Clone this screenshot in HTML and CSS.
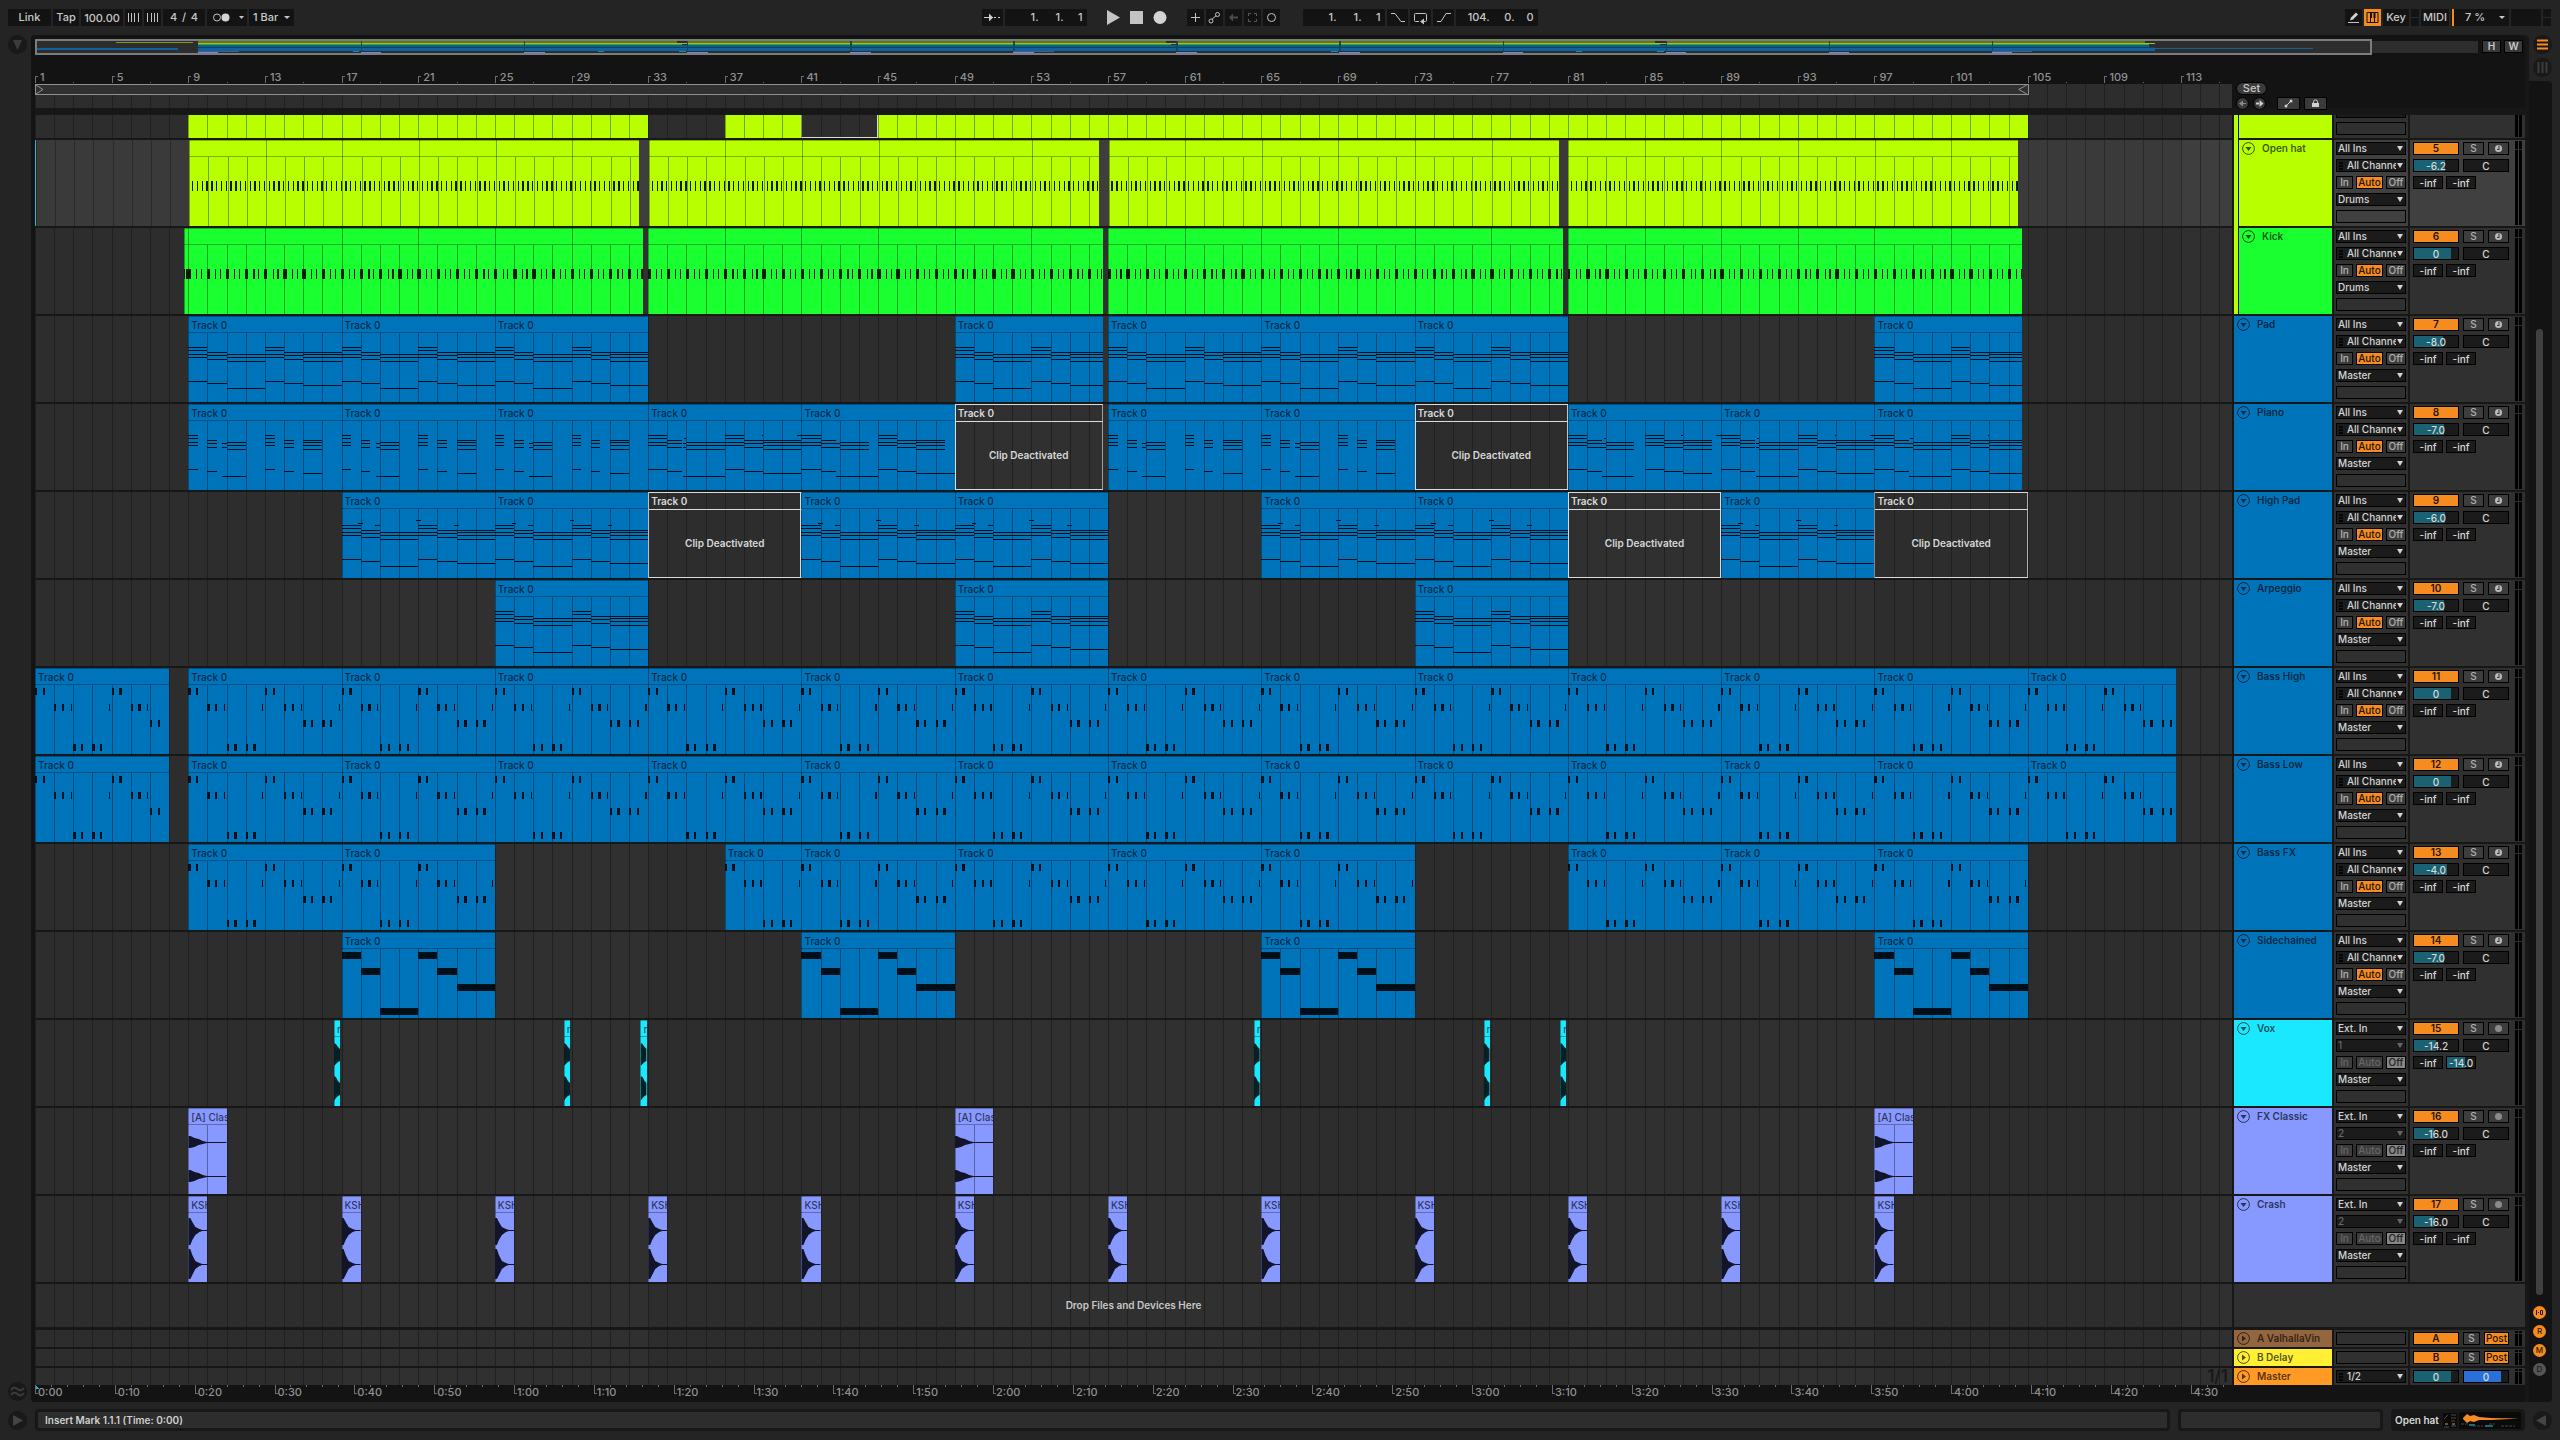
FILE: index.html
```html
<!DOCTYPE html>
<html lang="en">
<head>
<meta charset="utf-8">
<title>Arrangement</title>
<link rel="stylesheet" href="styles.css">
</head>
<body>
<header class="control-bar">
  <div class="group">
    <button class="cell w43">Link</button>
    <button class="cell w26">Tap</button>
    <input class="cell w42" aria-label="Tempo" value="100.00">
    <button class="cell w17" aria-label="Nudge down"><svg width="13" height="17"><path d="M1.5 4v9M4.5 4v9M7.5 4v9M11.5 4v9" stroke="#c4c4c4"/></svg></button>
    <button class="cell w17" aria-label="Nudge up"><svg width="13" height="17"><path d="M1.5 4v9M5.5 4v9M8.5 4v9M11.5 4v9" stroke="#c4c4c4"/></svg></button>
    <div class="cell w42 spread"><span>4</span><span>/</span><span>4</span></div>
    <button class="cell w40" aria-label="Metronome"><svg width="36" height="17"><circle cx="8" cy="8.500" r="3.500" fill="none" stroke="#c4c4c4"/><circle cx="16.500" cy="8.500" r="4" fill="#d4d4d4"/><path d="M30 7h5l-2.500 3z" fill="#c4c4c4"/></svg></button>
    <label class="cell w45 pick"><select aria-label="Quantization"><option>1 Bar</option></select></label>
  </div>
  <div class="group middle">
    <button class="cell w21" aria-label="Follow"><svg width="19" height="17"><path d="M1 8.500h9M11 8.500h2M15 8.500h2" stroke="#d0d0d0"/><path d="M6 4.500l4 4-4 4z" fill="#d0d0d0"/></svg></button>
    <div class="cell w82 position"><span>1.</span><span>1.</span><span>1</span></div>
    <div class="transport">
      <button aria-label="Play"><svg width="13" height="17"><path d="M0 1l13 7.500L0 16z" fill="#c4c4c4"/></svg></button>
      <button aria-label="Stop"><svg width="13" height="17"><path d="M0 2h13v13H0z" fill="#c4c4c4"/></svg></button>
      <button aria-label="Record"><svg width="14" height="17"><circle cx="7" cy="8.500" r="6.500" fill="#d4d4d4"/></svg></button>
    </div>
    <button class="cell w17" aria-label="Overdub"><svg width="15" height="17"><path d="M3 8.500h9M7.500 4v9" stroke="#c4c4c4"/></svg></button>
    <button class="cell w17" aria-label="Automation arm"><svg width="15" height="17"><path d="M4 11L10 6" stroke="#c4c4c4"/><circle cx="4" cy="12" r="2" fill="#131313" stroke="#c4c4c4"/><circle cx="10.500" cy="5.500" r="2" fill="#131313" stroke="#c4c4c4"/></svg></button>
    <button class="cell w17" aria-label="Re-enable automation"><svg width="15" height="17"><path d="M4 8.500h8" stroke="#4c4c4c" stroke-width="2"/><path d="M3 8.500l4-4v8z" fill="#4c4c4c"/></svg></button>
    <button class="cell w17" aria-label="Capture"><svg width="15" height="17"><path d="M3.500 7V4.500H6M9 4.500h2.500V7M11.500 10v2.500H9M6 12.500H3.500V10" fill="none" stroke="#5a5a5a"/></svg></button>
    <button class="cell w17" aria-label="Session record"><svg width="15" height="17"><circle cx="7.500" cy="8.500" r="4" fill="none" stroke="#c4c4c4"/></svg></button>
    <div class="cell w82 position lead"><span>1.</span><span>1.</span><span>1</span></div>
    <button class="cell w21" aria-label="Punch in"><svg width="19" height="17"><path d="M3 4.500h4l6 8h4" fill="none" stroke="#c4c4c4"/></svg></button>
    <button class="cell w21" aria-label="Loop"><svg width="19" height="17"><path d="M8 12.500H4.500q-1 0-1-1v-6q0-1 1-1h10q1 0 1 1v6q0 1-1 1H13" fill="none" stroke="#c4c4c4"/><path d="M9 12.500l4-3v6z" fill="#c4c4c4"/></svg></button>
    <button class="cell w21" aria-label="Punch out"><svg width="19" height="17"><path d="M3 12.500h4l5-8h5" fill="none" stroke="#c4c4c4"/></svg></button>
    <div class="cell w82 position"><span>104.</span><span>0.</span><span>0</span></div>
  </div>
  <div class="group right">
    <button class="cell w17" aria-label="Draw mode"><svg width="15" height="17"><path d="M2 13.500h11" stroke="#c4c4c4"/><path d="M4 11.500l1-3 5-5 2 2-5 5z" fill="#d0d0d0"/></svg></button>
    <button class="cell w17 lit" aria-label="Computer keyboard"><svg width="13" height="13"><path d="M1 1.500h11v10H1zM4.500 2v9M8.500 2v9" fill="none" stroke="#131313"/><path d="M4 2h2v5H4zM7.500 2h2v5h-2z" fill="#131313"/></svg></button>
    <button class="cell w26">Key</button>
    <span class="cell w8 io"></span>
    <button class="cell w28">MIDI</button>
    <label class="cell w58 pick load"><select aria-label="CPU load"><option>7 %</option></select></label>
    <span class="cell w30"></span>
    <span class="cell w8 io"></span>
  </div>
</header>

<main class="workspace">
  <aside class="rail left-rail">
    <button class="disc" aria-label="Show browser"><svg width="19" height="19"><path d="M5 5h9l-4.500 10z" fill="#3c3c3c"/></svg></button>
    <button class="disc" aria-label="Show groove"><svg width="19" height="19"><path d="M3 8q3-4 6.500-1t6.500-1M3 13q3-4 6.500-1t6.500-1" fill="none" stroke="#3c3c3c" stroke-width="2"/></svg></button>
  </aside>

  <section class="panel">
    <div class="overview-row">
      <div class="overview"><svg class="fill" id="overview"></svg></div>
      <button class="fit">H</button>
      <button class="fit">W</button>
    </div>
    <div class="ruler-row">
      <div class="ruler">
        <div class="bar-ruler" id="bars"></div>
        <div class="scrub"><svg class="fill" id="scrub"></svg></div>
      </div>
      <div class="locators">
        <button class="pill">Set</button>
        <div class="locator-row">
          <button class="nav dim" aria-label="Previous locator"><svg width="11" height="11"><path d="M2 5.500l4-3v6zM5 5h4v1H5z" fill="#8a8a8a"/></svg></button>
          <button class="nav" aria-label="Next locator"><svg width="11" height="11"><path d="M9.500 5.500l-4-3.500v7zM2 4.500h4v2H2z" fill="#d0d0d0"/></svg></button>
          <button class="tool first" aria-label="Automation mode"><svg width="11" height="11"><path d="M3 8l5-5" stroke="#d0d0d0"/><circle cx="3" cy="8" r="1.500" fill="#d0d0d0"/><circle cx="8" cy="3" r="1.500" fill="#d0d0d0"/></svg></button>
          <button class="tool" aria-label="Lock envelopes"><svg width="11" height="11"><path d="M2 5h7v4H2z" fill="#d0d0d0"/><path d="M3.500 5V3.500q0-1.500 2-1.500t2 1.500V5" fill="none" stroke="#d0d0d0"/></svg></button>
        </div>
      </div>
    </div>
    <div class="tracks" id="tracks"></div>
    <div class="drop-row">
      <div class="lane"><svg class="fill" data-grid></svg><p class="drop">Drop Files and Devices Here</p></div>
      <div class="blank"></div>
    </div>
    <div class="returns" id="returns"></div>
    <div class="time-row"><div class="time-ruler" id="times"></div></div>
  </section>

  <aside class="rail right-rail">
    <div class="views">
      <button class="disc" aria-label="Arrangement view"><svg width="19" height="19"><path d="M4 5.500h11M4 9.500h11M4 13.500h11" stroke="#f68b1f" stroke-width="2"/></svg></button>
      <button class="disc" aria-label="Session view"><svg width="19" height="19"><path d="M5.500 4v11M9.500 4v11M13.500 4v11" stroke="#3c3c3c" stroke-width="2"/></svg></button>
    </div>
    <div class="side">
      <div class="scrollbar"></div>
      <button class="dot" aria-label="Show I/O"><svg width="13" height="13"><path d="M3.500 4v5M5 6.500h1M7.500 4.500h2v4h-2z" fill="none" stroke="#2a1a08"/></svg></button>
      <button class="dot">R</button>
      <button class="dot">M</button>
      <button class="dot off">D</button>
    </div>
  </aside>
</main>

<footer class="status">
  <button class="disc" aria-label="Show info"><svg width="19" height="19"><path d="M5 4v11l10-5.500z" fill="#444"/></svg></button>
  <div class="message">Insert Mark 1.1.1 (Time: 0:00)</div>
  <div class="message small"></div>
  <div class="device"><span>Open hat</span><svg width="78" height="17"><path d="M0 1h14v15H0zM16 0h62v17H16z" fill="#0a0a0a"/><path d="M1 7l4-4M8 3h5M8 6h5M8 9h4" stroke="#4a4a4a"/><path d="M2 12h3M9 12h3" stroke="#f68b1f"/><path d="M1 15h5M8 14h5" stroke="#26606b"/><path d="M20 6l4-4 3 2 4-1 5 2 12 1 28 .5-28 1.500-12 0-5 2-4-1-3 2-4-4z" fill="#f68b1f"/><path d="M18 12h8M30 14h10M46 12h6M58 14h14" stroke="#454545" stroke-dasharray="3 1"/><path d="M26 13h6M42 14h8" stroke="#1f6a75" stroke-width="2"/></svg></div>
  <button class="disc" aria-label="Show detail"><svg width="19" height="19"><path d="M13 4v11L3 9.500z" fill="#444"/></svg></button>
</footer>
<script src="script.js"></script>
</body>
</html>
```
FILE: styles.css
```css
* { box-sizing: border-box; margin: 0; }
body {
  min-height: 100vh; display: flex; flex-direction: column;
  background: #242424; color: #c8c8c8;
  font: 500 10px/13px Inter, "Open Sans", sans-serif;
}
button, input, select { font: inherit; color: inherit; border: 0; padding: 0; background: none; border-radius: 0; }
svg { display: block; }
.fill { width: 100%; height: 100%; position: absolute; inset: 0; shape-rendering: crispEdges; }

/* control bar */
.control-bar { height: 35px; padding: 9px 9px 9px 8px; display: grid; grid-template-columns: 1fr auto 1fr; font-size: 11px; }
.group { display: flex; gap: 2px; }
.middle { margin-right: 40px; }
.right { justify-content: flex-end; }
.cell { height: 17px; background: #131313; display: flex; align-items: center; justify-content: center; text-align: center; overflow: hidden; flex: none; }
.w8 { width: 8px; } .w17 { width: 17px; } .w21 { width: 21px; } .w26 { width: 26px; } .w28 { width: 28px; }
.w30 { width: 30px; } .w40 { width: 40px; } .w42 { width: 42px; } .w43 { width: 43px; } .w45 { width: 45px; }
.w58 { width: 58px; } .w82 { width: 82px; }
.spread { justify-content: space-between; padding: 0 7px; }
.position { justify-content: flex-end; gap: 11px; padding-right: 4px; }
.position span { min-width: 14px; text-align: right; }
.position span:last-child { min-width: 8px; }
.lead { margin-left: 21px; }
.transport { display: flex; gap: 10px; padding: 0 18px; }
.lit { background: #f68b1f; }
.io { background: linear-gradient(#131313 8px, #2a2a2a 8px, #2a2a2a 9px, #131313 9px); }
.pick { position: relative; justify-content: flex-start; }
.pick select { width: 100%; height: 100%; appearance: none; padding-left: 4px; }
.pick::after { content: ""; position: absolute; right: 4px; top: 7px; border: 3px solid transparent; border-top: 3px solid #c8c8c8; border-bottom: 0; pointer-events: none; }
.load { border-left: 1px solid #131313; box-shadow: inset 2px 0 #f68b1f; }
.load select { padding-left: 13px; }

/* frame */
.workspace { flex: 1; display: flex; }
.rail { width: 31px; flex: none; display: flex; flex-direction: column; align-items: center; }
.left-rail { justify-content: space-between; padding: 0 0 1px 4px; }
.disc { width: 19px; height: 19px; border-radius: 50%; background: #191919; flex: none; }
.panel { flex: 1; min-width: 0; background: #171717; border-radius: 4px 4px 0 4px; padding: 0 4px; display: flex; flex-direction: column; box-shadow: inset 4px 0 #131313; }
.views { height: 46px; display: flex; flex-direction: column; align-items: center; gap: 4px; padding-right: 4px; }
.right-rail { align-items: stretch; }
.side { flex: 1; width: 23px; background: #131313; border-radius: 0 4px 4px 0; padding: 248px 2px 26px 0; display: flex; flex-direction: column; align-items: center; gap: 6px; }
.scrollbar { width: 7px; flex: 1; background: #404040; border-radius: 4px; margin-bottom: 5px; }
.dot { width: 13px; height: 13px; border-radius: 50%; background: #f68b1f; color: #2a1a08; font-size: 8px; flex: none; }
.off { background: #555; color: #1c1c1c; }

/* overview and rulers */
.overview-row { display: flex; gap: 3px; padding: 4px 2px 0 0; background: #131313; border-radius: 4px 4px 0 0; }
.overview { flex: 1; height: 16px; position: relative; margin-right: 1px; }
.fit { width: 19px; height: 13px; border: 1px solid #000; background: #3a3a3a; font-weight: 600; margin-top: 1px; line-height: 11px; }
.ruler-row { display: flex; gap: 2px; background: #131313; }
.ruler { flex: 1; display: flex; flex-direction: column; }
.bar-ruler { height: 29px; position: relative; color: #919191; font-size: 11px; }
.tick { position: absolute; bottom: 0; height: 13px; padding-left: 5px; line-height: 13px; }
.tick::before { content: ""; position: absolute; left: 0; bottom: 1px; width: 2px; height: 6px; border: 1px solid #6c6c6c; border-width: 1px 0 0 1px; }
.scrub { height: 24px; position: relative; background: #2d2d2d; }
.locators { width: 291px; padding: 27px 0 0 2px; margin-bottom: -3px; }
.pill { width: 31px; height: 13px; border: 1px solid #000; border-radius: 7px; background: #3a3a3a; font-size: 11px; line-height: 11px; display: block; }
.locator-row { display: flex; gap: 4px; padding-top: 2px; align-items: center; }
.nav { width: 13px; height: 13px; border-radius: 50%; border: 1px solid #000; background: #3a3a3a; flex: none; }
.tool { width: 23px; height: 13px; border: 1px solid #000; background: #3a3a3a; display: flex; justify-content: center; align-items: center; }
.first { margin-left: 7px; }
.tracks { padding-top: 7px; display: flex; flex-direction: column; gap: 2px; }

/* tracks */
.track, .return { display: grid; grid-template-columns: minmax(0, 1fr) 98px 74px 115px; gap: 0 2px; height: 86px; flex: none; }
.peek { height: 23px; overflow: hidden; display: flex; flex-direction: column; justify-content: flex-end; }
.lane { position: relative; overflow: hidden; background: #2d2d2d; }
.selected .lane { border-left: 1px solid #25b8dc; }
.title { position: absolute; top: 1px; height: 16px; line-height: 16px; padding-left: 3px; overflow: hidden; white-space: nowrap; color: rgba(0, 0, 0, .68); }
.title.muted { color: #d8d8d8; font-weight: 600; }
.note { position: absolute; top: 43px; line-height: 16px; text-align: center; color: #d8d8d8; font-weight: 600; }
.head { background: var(--tint); color: rgba(0, 0, 0, .68); font-weight: 600; display: flex; align-items: flex-start; padding: 2px 0 0 3px; gap: 7px; white-space: nowrap; overflow: hidden; }
.nested { position: relative; }
.nested .head { box-shadow: inset 5px 0 #171717; padding-left: 8px; }
.nested::after { content: ""; position: absolute; top: -2px; bottom: 0; right: 287px; width: 4px; background: #b8ff00; }
.fold { width: 13px; height: 13px; color: inherit; flex: none; }
.col { background: #303030; padding: 2px; display: flex; flex-direction: column; gap: 4px; overflow: hidden; }
.selected .col { background: #404040; }
.box { height: 13px; border: 1px solid #000; background: #1b1b1b; display: block; width: 100%; position: relative; line-height: 11px; flex: none; overflow: hidden; color: #d4d4d4; }
.box select { appearance: none; width: 100%; height: 11px; line-height: 11px; display: block; padding-left: 1px; }
.box.down::after { content: ""; position: absolute; right: 2px; top: 3px; border: 3px solid transparent; border-top: 5px solid #d4d4d4; border-bottom: 0; pointer-events: none; }
.box.channel select { padding: 0 9px 0 10px; }
.box.channel::before, .box.pair::before { content: ""; position: absolute; left: 2px; top: 2px; width: 4px; height: 8px; background: repeating-linear-gradient(#050505 0 2px, #1b1b1b 2px 3px); }
.box.pair select { padding-left: 10px; }
.box.faint { color: #666; }
.box.faint::after { border-top-color: #666; }
.box.empty { background: #303030; }
.selected .box.empty { background: #404040; }
.trio { display: flex; gap: 3px; }
.mon { height: 13px; border: 1px solid #000; background: #3d3d3d; line-height: 11px; color: #b0b0b0; overflow: hidden; flex: none; }
.mon.a { width: 17px; } .mon.b { width: 27px; } .mon.c { width: 20px; }
.mon.on { background: #f68b1f; color: #241404; }
.mon.gone { color: #666; }
.mon.grey { background: #868686; color: #222; }
.mix { background: #303030; display: flex; justify-content: space-between; padding: 0 3px; overflow: hidden; }
.selected .mix { background: #404040; }
.strip { padding-top: 2px; display: flex; flex-direction: column; gap: 4px; }
.line { display: flex; gap: 4px; }
.line.sends { gap: 3px; }
.act { width: 46px; height: 13px; border: 1px solid #000; background: #f68b1f; color: #241404; line-height: 11px; font-weight: 600; }
.sq { width: 21px; height: 13px; border: 1px solid #000; background: #3d3d3d; color: #b0b0b0; line-height: 11px; display: flex; justify-content: center; align-items: center; }
.sq.slim { width: 17px; }
.post { width: 25px; height: 13px; border: 1px solid #000; background: #f68b1f; color: #241404; line-height: 11px; }
.val { width: 46px; height: 13px; border: 1px solid #000; text-align: center; color: #d8d8d8; line-height: 11px; background: linear-gradient(90deg, #1a6272 var(--fill, 0%), #1b1b1b var(--fill, 0%)); }
.val.cue { background: linear-gradient(90deg, #2a70d8 var(--fill, 0%), #1b1b1b var(--fill, 0%)); }
.sends .val { width: 30px; }
.meter { width: 7px; margin: 1px 0; background: linear-gradient(90deg, #000 3px, transparent 3px, transparent 4px, #000 4px); position: relative; }
.meter::after { content: ""; position: absolute; left: 0; right: 0; top: 8px; height: 1px; background: #303030; }
.return .meter::after { top: 2px; }
.drop-row { flex: 1 0 45px; display: grid; grid-template-columns: minmax(0, 1fr) 291px; gap: 2px; padding-top: 2px; }
.drop { position: relative; text-align: center; font-weight: 600; color: #c8c8c8; padding-top: 15px; }
.blank { background: #303030; }
.returns { display: flex; flex-direction: column; gap: 2px; padding-top: 3px; }
.return { height: 17px; }
.division { position: absolute; right: 4px; bottom: 0; font-size: 17px; line-height: 17px; font-weight: 600; color: #191919; }
.time-row { background: #131313; padding-right: 293px; border-radius: 0 0 4px 4px; }
.time-ruler { height: 17px; position: relative; color: #919191; font-size: 11px; }
.stamp { position: absolute; top: 0; padding-left: 3px; line-height: 15px; }
.stamp::before { content: ""; position: absolute; left: 0; top: 0; width: 2px; height: 8px; border: 1px solid #6c6c6c; border-width: 0 0 1px 1px; }

/* status */
.status { height: 38px; display: flex; align-items: center; gap: 8px; padding: 0 8px 2px; }
.message { flex: 1; height: 22px; background: #2d2d2d; border: 3px solid #171717; border-radius: 4px; padding-left: 7px; line-height: 16px; font-weight: 600; color: #d0d0d0; }
.message.small { flex: none; width: 205px; }
.device { width: 134px; height: 22px; background: #171717; border-radius: 4px; display: flex; align-items: center; justify-content: space-between; padding: 0 4px; font-weight: 600; white-space: nowrap; color: #d8d8d8; }
```
FILE: script.js
```js
// Bars visible across the timeline, counted from bar 1.
const SPAN = 114.66;
const at = bar => (bar - 1) / SPAN * 100 + '%';
const wide = bars => bars / SPAN * 100 + '%';
const rect = (from, to, y, h, fill) =>
  `<rect x="${at(from)}" width="${wide(to - from)}" y="${y}" height="${h}" fill="${fill}"/>`;
const vline = (bar, y, h, fill) => `<rect x="${at(bar)}" width="1" y="${y}" height="${h}" fill="${fill}"/>`;

function grid(light) {
  let out = '';
  for (let b = 1; b < 115; b += 16) {
    const odd = ((b - 1) / 16) % 2;
    out += rect(b, Math.min(b + 16, 116), 0, '100%', light ? (odd ? '#3e3e3e' : '#3a3a3a') : (odd ? '#303030' : '#2d2d2d'));
  }
  for (let b = 1; b < 116; b++) out += vline(b, 0, '100%', light ? '#292929' : '#202020');
  return out;
}

// Notes: [start, end, y, height], start and end in bars from the clip's start.
const chord = (s, e, ys) => ys.map(y => [s, e, y, 1]);
const C1 = [31, 34, 38, 41], C2 = [36, 39, 43], C3 = [38, 41, 45], C4 = [36, 38, 41, 45];
const pad = [
  ...chord(0, 1, [...C1, 65]), ...chord(1, 2, [...C2, 67]), ...chord(2, 4, [...C3, 72]),
  ...chord(4, 5, [...C1, 65]), ...chord(5, 6, [...C2, 67]), ...chord(6, 8, [...C4, 69])];
const high = [...pad.map(n => [n[0], n[1], n[2] + 2, 1]),
  [.88, 1.12, 31, 1], [1.75, 2, 33, 1], [3.9, 4.15, 28, 1], [5.88, 6.12, 33, 1]];
const pianoShort = [
  ...chord(0, .5, [...C1, 65]), ...chord(1, 1.5, [...C2, 67]), ...chord(1.78, 2, [39, 43, 72]), ...chord(2, 3, [...C3, 72]),
  ...chord(4, 4.5, [...C1, 65]), ...chord(5, 5.5, [...C2, 67]), ...chord(6, 7, [...C4, 69])];
const pianoBase = [...chord(0, 1, [...C1, 65]), ...chord(1, 1.78, [...C2, 67]), ...chord(1.8, 2, [39, 43, 72]),
  ...chord(4, 5, [...C1, 65]), ...chord(5, 6, [...C2, 67])];
const pickups = [[1.88, 2, 34, 1], [5.92, 6, 31, 1], [7.75, 8, 31, 1]];
const pianoLong = [...pianoBase, ...pickups, ...chord(2, 4, [...C3, 72]), ...chord(6, 8, [...C4, 69])];
const pianoGap = [...pianoBase, ...chord(2, 3.5, C3), ...chord(2, 4, [72]), ...chord(6, 7.5, C4), ...chord(6, 8, [69])];
const pianoBreak = [...pianoBase, ...pickups, ...chord(2, 3.45, [...C3, 72]), ...chord(6, 7.5, [...C4, 69])];
const bassStarts = { 20: [0, .4, 4, 4.4], 36: [1, 1.4, 1.86, 3.86, 5, 5.4, 5.86, 7.86], 52: [6, 6.4, 7, 7.4], 76: [2, 2.4, 3, 3.4] };
const bass = Object.entries(bassStarts).flatMap(([y, list]) => list.map(s => [s, s + (s % 1 > .8 ? .06 : .12), +y, 7]));
const side = [[0, 1, 20, 7], [1, 2, 36, 7], [2, 4, 76, 7], [4, 5, 20, 7], [5, 6, 36, 7], [6, 8, 52, 7]];
const hats = [.15, .4, .65, .9].map(s => [s, s + .07, 41, 10]);
const kicks = [[0, .13, 41, 10], [.4, .46, 41, 10], [.65, .71, 41, 10], [.96, 1, 41, 10]];
const repeat = (notes, bars) => Array.from({ length: bars }, (_, i) => notes.map(n => [n[0] + i, n[1] + i, n[2], n[3]])).flat();

const waves = {
  vox: 'M0 23L2 24 4 27 6 29V41L4 42 2 44 0 46zM0 56L2 57 4 61 6 63V75L4 76 2 78 0 81z',
  fx: 'M0 28L2 28 6 30 10 31 14 33 18 34H37V35H18L14 36 10 37 6 39 2 40 0 40zM0 62L2 62 6 64 10 65 14 67 18 68H37V69H18L14 70 10 71 6 73 2 74 0 74z',
  crash: 'M0 22H2L4 26 7 31 11 33 14 34H19V35H14L11 36 7 39 4 44 2 49H0zM0 53H2L4 59 7 65 11 67 14 68H19V69H14L11 70 7 73 4 79 2 83H0z'
};

const clips = (starts, notes, title = 'Track 0', len = 8) => starts.map(s => ({ s, e: s + len, notes, title }));
const cut = (list, start, end) => list.map(c => c.s === start ? { ...c, e: end } : c);
const off = (s, e, title = 'Track 0') => ({ s, e, title, off: true });

function fours(ends, notes) {
  const out = [];
  [9, 33, 57, 81].forEach((s, i) => {
    for (let b = s; b < ends[i]; b += 4) out.push({ s: b, e: Math.min(b + 4, ends[i]), notes: repeat(notes, 4), title: '' });
  });
  return out;
}

function drawLane(track) {
  let svg = grid(track.selected), html = '';
  const ink = { '#0074bb': '#000e18', '#8799ff': '#12152a', '#19e8ff': '#032024' }[track.tint] || '#0c1a02';
  for (const c of track.clips) {
    const len = c.e - c.s;
    if (c.off) {
      svg += `<svg x="${at(c.s)}" width="${wide(len)}" height="86"><path d="M0 0h9999v1H0zM0 17h9999v1H0zM0 85h9999v1H0zM0 0h1v86H0z" fill="#dcdcdc"/><rect x="100%" width="1" height="86" transform="translate(-1)" fill="#dcdcdc"/></svg>`;
      if (c.title) html += `<span class="title muted" style="left:${at(c.s)};width:${wide(len)}">${c.title}</span><span class="note" style="left:${at(c.s)};width:${wide(len)}">Clip Deactivated</span>`;
      continue;
    }
    svg += rect(c.s, c.e, 0, 86, track.tint);
    svg += rect(c.s, c.e, 0, 1, 'rgba(0,0,0,.3)') + rect(c.s, c.e, 16, 1, 'rgba(0,0,0,.3)') + vline(c.s, 0, 86, 'rgba(0,0,0,.35)');
    for (let b = Math.floor(c.s) + 1; b < c.e; b++) svg += vline(b, 17, 69, 'rgba(0,0,0,.35)');
    for (const n of c.notes || []) if (n[0] < len) svg += rect(c.s + n[0], c.s + Math.min(n[1], len), n[2], n[3], ink);
    if (c.wave) {
      const w = { vox: 6, fx: 37, crash: 19 }[c.wave];
      svg += `<svg x="${at(c.s)}" width="${wide(len)}" height="86" viewBox="0 0 ${w} 86" preserveAspectRatio="none"><path d="${waves[c.wave]}" fill="${ink}" shape-rendering="auto"/></svg>`;
    }
    if (c.title) html += `<span class="title" style="left:${at(c.s)};width:${wide(len)}">${c.title}</span>`;
  }
  return `<div class="lane"><svg class="fill">${svg}</svg>${html}</div>`;
}

const BLUE = '#0074bb', LIME = '#b8ff00', VIOLET = '#8799ff';
const eights = [9, 17, 25, 33, 41, 49, 57, 65, 73, 81, 89, 97, 105];
const bassLine = [{ s: 1, e: 8, notes: bass, title: 'Track 0' }, ...cut(clips(eights, bass), 105, 112.75)];
const audio = (kind, title, starts, len) => starts.map(s => ({ s, e: s + len, title, wave: kind }));

const tracks = [
  { n: '', name: '', tint: LIME, nested: true, peek: true, out: 'Drums', vol: '', fill: 84,
    clips: [{ s: 9, e: 33 }, { s: 37, e: 41 }, off(41, 45, ''), { s: 45, e: 105 }] },
  { n: 5, name: 'Open hat', tint: LIME, nested: true, selected: true, out: 'Drums', vol: '-6.2', fill: 71, clips: fours([32.5, 56.5, 80.5, 104.5], hats) },
  { n: 6, name: 'Kick', tint: '#1aff2f', nested: true, out: 'Drums', vol: '0', fill: 84,
    clips: [{ s: 8.78, e: 9, notes: [[0, .04, 41, 10], [.12, .22, 41, 10]] }, ...fours([32.72, 56.72, 80.72, 104.72], kicks)] },
  { n: 7, name: 'Pad', vol: '-8.0', fill: 66, clips: cut(cut(clips([9, 17, 25, 49, 57, 65, 73, 97], pad), 49, 56.72), 97, 104.72) },
  { n: 8, name: 'Piano', vol: '-7.0', fill: 68, clips: [...clips([9, 17, 25, 57, 65], pianoShort), ...cut(clips([33, 89, 97], pianoLong), 97, 104.72), ...clips([41], pianoGap), ...clips([81], pianoBreak), off(49, 56.72), off(73, 81)] },
  { n: 9, name: 'High Pad', vol: '-6.0', fill: 70, clips: [...clips([17, 25, 41, 49, 65, 73, 89], high), off(33, 41), off(81, 89), off(97, 105)] },
  { n: 10, name: 'Arpeggio', vol: '-7.0', fill: 68, clips: clips([25, 49, 73], pad) },
  { n: 11, name: 'Bass High', vol: '0', fill: 84, clips: bassLine },
  { n: 12, name: 'Bass Low', vol: '0', fill: 84, clips: bassLine },
  { n: 13, name: 'Bass FX', vol: '-4.0', fill: 75, clips: [...clips([37], bass, 'Track 0', 4), ...clips([9, 17, 41, 49, 57, 65, 81, 89, 97], bass)] },
  { n: 14, name: 'Sidechained', vol: '-7.0', fill: 68, clips: clips([17, 41, 65, 97], side) },
  { n: 15, name: 'Vox', tint: '#19e8ff', audio: '1', vol: '-14.2', fill: 50, send: '-14.0', clips: audio('vox', 'r', [16.6, 28.6, 32.6, 64.6, 76.6, 80.6], .32) },
  { n: 16, name: 'FX Classic', tint: VIOLET, audio: '2', vol: '-16.0', fill: 45, clips: audio('fx', '[A] Classic', [9, 49, 97], 2) },
  { n: 17, name: 'Crash', tint: VIOLET, audio: '2', vol: '-16.0', fill: 45, clips: audio('crash', 'KSHMR', eights.slice(0, 12), 1) }
];

const fold = open => `<button class="fold" aria-label="Fold"><svg width="13" height="13"><circle cx="6.5" cy="6.5" r="5.900" fill="none" stroke="currentColor"/><path d="${open ? 'M3.500 5h6l-3 4z' : 'M5 3.500v6l4-3z'}" fill="currentColor"/></svg></button>`;
const choose = (label, text, cls = '') => `<label class="box down ${cls}"><select aria-label="${label}"><option>${text}</option></select></label>`;
const value = (label, text, fill, cls = '') => `<input class="val ${cls}" aria-label="${label}" value="${text}"${fill ? ` style="--fill:${fill}%"` : ''}>`;
const arm = midi => midi
  ? '<svg width="9" height="9"><circle cx="4.500" cy="4.500" r="3.500" fill="#bdbdbd"/><path d="M4.500 5V1.500h1V6H3V5z" fill="#303030"/></svg>'
  : '<svg width="9" height="9"><circle cx="4.500" cy="4.500" r="3.500" fill="#8a8a8a"/></svg>';

function trackRow(t) {
  t.tint = t.tint || BLUE;
  const a = t.audio;
  return `<div class="${t.peek ? 'peek' : ''}"><div class="track ${t.selected ? 'selected' : ''} ${t.nested ? 'nested' : ''}">
    ${drawLane(t)}
    <div class="head" style="--tint:${t.tint}">${fold(true)}<span>${t.name}</span></div>
    <div class="col">${choose('Input type', a ? 'Ext. In' : 'All Ins')}${a ? choose('Input channel', a, 'faint') : choose('Input channel', 'All Channels', 'channel')}
      <div class="trio"><button class="mon a ${a ? 'gone' : ''}">In</button><button class="mon b ${a ? 'gone' : 'on'}">Auto</button><button class="mon c ${a ? 'grey' : ''}">Off</button></div>
      ${choose('Output', t.out || 'Master')}<span class="box empty"></span></div>
    <div class="mix"><div class="strip">
      <div class="line"><button class="act">${t.n}</button><button class="sq">S</button><button class="sq" aria-label="Arm">${arm(!a)}</button></div>
      <div class="line">${value('Volume', t.vol, t.fill)}${value('Pan', 'C')}</div>
      <div class="line sends">${value('Send A', '-inf')}${value('Send B', t.send || '-inf', t.send ? 64 : 0)}</div>
    </div><div class="meter"></div></div></div></div>`;
}
document.getElementById('tracks').innerHTML = tracks.map(trackRow).join('');

const returnRow = (name, tint, io, mixer, extra = '') => `<div class="return">
  <div class="lane"><svg class="fill">${grid()}</svg>${extra}</div>
  <div class="head" style="--tint:${tint}">${fold(false)}<span>${name}</span></div>
  <div class="col">${io}</div><div class="mix"><div class="strip"><div class="line">${mixer}</div></div><div class="meter"></div></div></div>`;
const sendMix = l => `<button class="act">${l}</button><button class="sq slim">S</button><button class="post">Post</button>`;
document.getElementById('returns').innerHTML =
  returnRow('A ValhallaVin', '#936640', '<span class="box empty"></span>', sendMix('A')) +
  returnRow('B Delay', '#fff034', '<span class="box empty"></span>', sendMix('B')) +
  returnRow('Master', '#ff9a24', choose('Master output', '1/2', 'pair'), value('Master volume', '0', 84) + value('Cue volume', '0', 84, 'cue'), '<span class="division">1/1</span>');

document.querySelectorAll('[data-grid]').forEach(el => { el.innerHTML = grid(); });

// Bar numbers every four bars, a short mark halfway between.
document.getElementById('bars').innerHTML =
  Array.from({ length: 29 }, (_, i) => `<span class="tick" style="left:${at(1 + i * 4)}">${1 + i * 4}</span>`).join('') +
  `<svg class="fill">${Array.from({ length: 29 }, (_, i) => vline(3 + i * 4, 27, 1, '#6c6c6c')).join('')}</svg>`;

document.getElementById('scrub').innerHTML = grid() +
  rect(1, 105, 0, 11, '#303030') + rect(1, 105, 0, 1, '#919191') + rect(1, 105, 10, 1, '#919191') +
  vline(1, 0, 11, '#919191') + vline(105, 0, 11, '#919191') +
  '<path d="M1 1l7 4.500L1 10" fill="none" stroke="#919191" shape-rendering="auto"/>' +
  `<svg x="${at(105)}" overflow="visible"><path d="M-1 1l-8 4.500 8 4.500" fill="none" stroke="#919191" shape-rendering="auto"/></svg>`;

// At 100 BPM ten seconds last 4 1/6 bars.
let times = '', minor = '';
for (let s = 0; s < 276; s += 2) {
  const bar = 1 + s / 2.4;
  if (bar > SPAN + 1) break;
  if (s % 10) minor += vline(bar, 0, 2, '#6c6c6c');
  else times += `<span class="stamp" style="left:${at(bar)}">${Math.floor(s / 60)}:${String(s % 60).padStart(2, '0')}</span>`;
}
document.getElementById('times').innerHTML = `<svg class="fill">${minor}<path d="M0 0l5 4H0z" fill="#25b8dc"/></svg>` + times;

// Overview strip: the whole song, with a frame around the visible part.
const FULL = 119.86;
const mini = (from, to, y, h, fill) => `<rect x="${(from - 1) / FULL * 100}%" width="${(to - from) / FULL * 100}%" y="${y}" height="${h}" fill="${fill}"/>`;
let map = mini(1, 121, 2, 12, '#2d2d2d');
map += mini(4.96, 8.74, 3, 1, '#7d9a1a');
[9, 33, 57, 81].forEach(b => { map += mini(b, b + 23.5, 2, 2, '#66761c') + mini(b, b + 23.72, 5, 1, '#2fae2e'); });
map += mini(9, 105, 4, 1, '#9cc41c') + mini(9, 104.72, 6, 2, '#0f5c92') + mini(9, 105, 8, 1, '#173f5c') + mini(9, 105, 9, 3, '#0f629e') +
  mini(1.1, 8, 9, 2, '#0f629e') + mini(105, 112.75, 9, 1, '#0f629e');
for (let b = 17; b < 105; b += 8) map += mini(b, b + .06, 2, 10, '#174a4c');
[9, 49, 97].forEach(b => { map += mini(b, b + 2, 12, 1, '#4f578c'); });
[16.6, 28.6, 32.6, 64.6, 76.6, 80.6].forEach(b => { map += mini(b, b + .32, 12, 1, '#1f8d99'); });
eights.slice(0, 12).forEach(b => { map += mini(b, b + 1, 13, 1, '#7d87d8'); });
map += mini(1, 1 + SPAN, 0, 2, '#7c7c7c') + mini(1, 1 + SPAN, 14, 2, '#7c7c7c') + mini(1, 1.1, 0, 16, '#7c7c7c') + mini(SPAN + .9, SPAN + 1, 0, 16, '#7c7c7c');
document.getElementById('overview').innerHTML = map;
```
